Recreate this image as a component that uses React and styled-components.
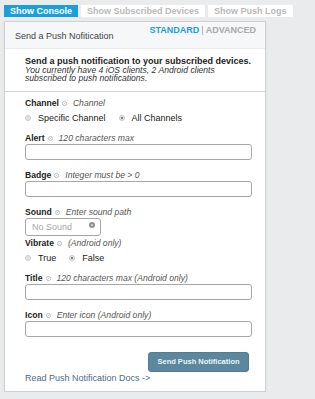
import React, { useState } from 'react';
import styled, { createGlobalStyle } from 'styled-components';

const GlobalStyle = createGlobalStyle`
    body {
        margin: 0;
        background: #e9ebed;
        font-family: "Liberation Sans", Arial, sans-serif;
        color: #222;
    }
`;

const fields = [
    { name: 'alert', label: 'Alert', hint: '120 characters max' },
    { name: 'badge', label: 'Badge', hint: 'Integer must be > 0' },
];

const androidFields = [
    { name: 'title', label: 'Title', hint: '120 characters max (Android only)' },
    { name: 'icon', label: 'Icon', hint: 'Enter icon (Android only)' },
];

const InfoIcon = () => (
    <svg width="5" height="5" viewBox="0 0 10 10">
        <circle cx="5" cy="5" r="4.2" fill="none" stroke="#a3a3a3" strokeWidth="1.3" />
        <path d="M3.4 6.6 L6.6 3.4" stroke="#a3a3a3" strokeWidth="1.3" />
    </svg>
);

const FieldLabel = ({ label, hint }) => (
    <LabelLine>
        <LabelText>{label}</LabelText>
        <InfoIcon />
        <Hint>{hint}</Hint>
    </LabelLine>
);

const Radio = ({ checked, label, onClick }) => (
    <RadioOption onClick={onClick}>
        <RadioDot $checked={checked} />
        {label}
    </RadioOption>
);

const App = () => {
    const [mode, setMode] = useState('standard');
    const [channel, setChannel] = useState('all');
    const [vibrate, setVibrate] = useState(false);

    return (
        <Page>
            <GlobalStyle />
            <Tabs>
                <Tab $active>Show Console</Tab>
                <Tab>Show Subscribed Devices</Tab>
                <Tab>Show Push Logs</Tab>
            </Tabs>
            <Panel>
                <Header>
                    <Title>Send a Push Nofitication</Title>
                    <ModeSwitch>
                        <ModeLink $active={mode === 'standard'} onClick={() => setMode('standard')}>STANDARD</ModeLink>
                        <Divider>|</Divider>
                        <ModeLink $active={mode === 'advanced'} onClick={() => setMode('advanced')}>ADVANCED</ModeLink>
                    </ModeSwitch>
                </Header>
                <Intro>
                    <strong>Send a push notification to your subscribed devices.</strong>
                    <em>You currently have 4 iOS clients, 2 Android clients subscribed to push notifications.</em>
                </Intro>
                <Form>
                    <Field>
                        <FieldLabel label="Channel" hint="Channel" />
                        <RadioRow>
                            <Radio label="Specific Channel" checked={channel === 'specific'} onClick={() => setChannel('specific')} />
                            <Radio label="All Channels" checked={channel === 'all'} onClick={() => setChannel('all')} />
                        </RadioRow>
                    </Field>
                    {fields.map((f) => (
                        <Field key={f.name}>
                            <FieldLabel label={f.label} hint={f.hint} />
                            <TextInput name={f.name} />
                        </Field>
                    ))}
                    <Field $tight>
                        <FieldLabel label="Sound" hint="Enter sound path" />
                        <SoundSelect>
                            No Sound
                            <ClearIcon width="6" height="6" viewBox="0 0 10 10">
                                <circle cx="5" cy="5" r="5" fill="#8f8f8f" />
                                <path d="M3.3 3.3 L6.7 6.7 M6.7 3.3 L3.3 6.7" stroke="#e6e6e6" strokeWidth="1.2" />
                            </ClearIcon>
                        </SoundSelect>
                    </Field>
                    <Field>
                        <FieldLabel label="Vibrate" hint="(Android only)" />
                        <RadioRow>
                            <Radio label="True" checked={vibrate} onClick={() => setVibrate(true)} />
                            <Radio label="False" checked={!vibrate} onClick={() => setVibrate(false)} />
                        </RadioRow>
                    </Field>
                    {androidFields.map((f) => (
                        <Field key={f.name}>
                            <FieldLabel label={f.label} hint={f.hint} />
                            <TextInput name={f.name} />
                        </Field>
                    ))}
                    <Actions>
                        <SendButton type="button">Send Push Notification</SendButton>
                    </Actions>
                    <DocsLink href="#">Read Push Notification Docs -&gt;</DocsLink>
                </Form>
            </Panel>
        </Page>
    );
};

const Page = styled.div`
    padding: 5px 0 0 4px;
    width: 262px;
`;

const Tabs = styled.div`
    display: flex;
    gap: 3px;
`;

const Tab = styled.div`
    height: 12px;
    line-height: 12px;
    padding: 0 6px;
    font-size: 9px;
    font-weight: bold;
    background: ${(p) => (p.$active ? '#1a9fdb' : '#fff')};
    color: ${(p) => (p.$active ? '#fff' : '#b9b9b9')};
    white-space: nowrap;
    cursor: pointer;
`;

const Panel = styled.div`
    margin-top: 4px;
    background: #fff;
    border: 1px solid #cfd1d3;
    box-shadow: 0 1px 2px rgba(0, 0, 0, 0.08);
`;

const Header = styled.div`
    height: 26px;
    display: flex;
    justify-content: space-between;
    padding: 0 9px 0 10px;
    background: #f6f7f8;
    border-bottom: 1px solid #ececec;
`;

const Title = styled.div`
    align-self: center;
    margin-top: 1px;
    font-size: 9px;
    color: #444;
`;

const ModeSwitch = styled.div`
    margin-top: 3px;
    font-size: 9px;
    line-height: 10px;
    font-weight: bold;
`;

const ModeLink = styled.span`
    color: ${(p) => (p.$active ? '#1a9fdb' : '#a9a9a9')};
    cursor: pointer;
`;

const Divider = styled.span`
    font-weight: normal;
    color: #9a9a9a;
    margin: 0 2px;
`;

const Intro = styled.div`
    padding: 8px 12px 8px 20px;
    border-bottom: 1px solid #d2d2d2;
    font-size: 9px;
    line-height: 8.5px;
    color: #222;

    strong,
    em {
        display: block;
    }

    em {
        font-size: 8.6px;
        color: #333;
    }
`;

const Form = styled.div`
    padding: 6px 12px 8px 20px;
`;

const Field = styled.div`
    margin-bottom: ${(p) => (p.$tight ? '2px' : '10px')};
`;

const LabelLine = styled.div`
    display: flex;
    align-items: center;
    height: 10px;
    font-size: 8.6px;
    white-space: nowrap;

    svg {
        margin: 1px 6px 0 3px;
    }
`;

const LabelText = styled.span`
    font-weight: bold;
    color: #222;
`;

const Hint = styled.span`
    font-style: italic;
    color: #555;
`;

const TextInput = styled.input`
    display: block;
    box-sizing: border-box;
    width: 227px;
    height: 16px;
    margin-top: 1px;
    border: 1px solid #a7a7a7;
    border-radius: 3px;
    background: #fff;
    padding: 0 4px;
    font-size: 9px;
`;

const SoundSelect = styled.div`
    position: relative;
    box-sizing: border-box;
    width: 76px;
    height: 18px;
    margin-top: 1px;
    padding-left: 6px;
    border: 1px solid #a7a7a7;
    border-radius: 3px;
    font-size: 9px;
    line-height: 16px;
    color: #a9a9a9;
`;

const ClearIcon = styled.svg`
    position: absolute;
    top: 3px;
    right: 5px;
`;

const RadioRow = styled.div`
    display: flex;
    gap: 13px;
    margin-top: 5px;
    height: 10px;
`;

const RadioOption = styled.label`
    display: flex;
    align-items: center;
    gap: 7px;
    font-size: 9px;
    color: #222;
    cursor: pointer;
`;

const RadioDot = styled.span`
    position: relative;
    box-sizing: border-box;
    width: 6px;
    height: 6px;
    border-radius: 50%;
    background: #e2e2e2;
    border: 1px solid #cbcbcb;

    &::after {
        content: '';
        display: ${(p) => (p.$checked ? 'block' : 'none')};
        position: absolute;
        left: 1px;
        top: 1px;
        width: 2px;
        height: 2px;
        border-radius: 50%;
        background: #666;
    }
`;

const Actions = styled.div`
    display: flex;
    justify-content: flex-end;
    padding-right: 4px;
    margin-top: 15px;
`;

const SendButton = styled.button`
    box-sizing: border-box;
    width: 101px;
    height: 20px;
    padding: 0;
    border: 1px solid #4f7d94;
    border-radius: 3px;
    background: #5b889f;
    color: #eef3f6;
    font-family: "Liberation Sans", Arial, sans-serif;
    font-size: 7.5px;
    font-weight: bold;
    cursor: pointer;
`;

const DocsLink = styled.a`
    display: block;
    margin-top: 1px;
    font-size: 9px;
    line-height: 10px;
    color: #4d6d85;
    text-decoration: none;
`;

export default App;
